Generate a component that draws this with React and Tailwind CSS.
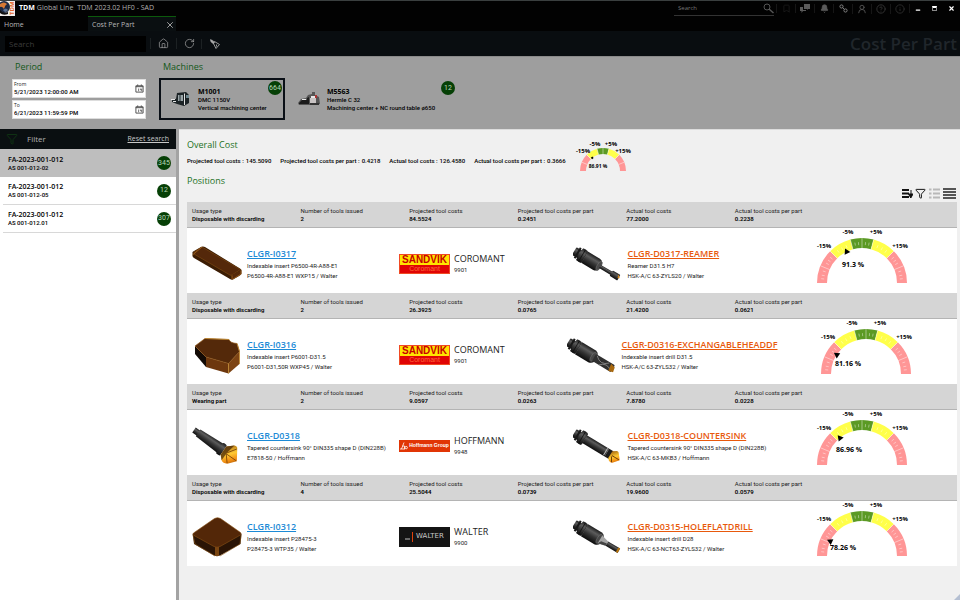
import React from "react";
import {
  House, RotateCw, X, Bell, UserRound, CircleHelp, Info, Funnel, Minus, Bookmark,
} from "lucide-react";

const positions = [
  {
    stats: ["Disposable with discarding", "2", "84.5524", "0.2451", "77.2000", "0.2238"],
    item: { art: "bar", name: "CLGR-I0317", lines: ["Indexable insert P6500-4R-A88-E1", "P6500-4R-A88-E1 WXP15 / Walter"] },
    brand: { logo: "sandvik", name: "COROMANT", code: "9901" },
    tool: { art: "reamer", name: "CLGR-D0317-REAMER", lines: ["Reamer D31.5 H7", "HSK-A/C 63-ZYLS20 / Walter"] },
    gauge: { value: 91.3, label: "91.3 %", x: -9, y: -16 },
  },
  {
    stats: ["Disposable with discarding", "2", "26.3925", "0.0765", "21.4200", "0.0621"],
    item: { art: "trigon", name: "CLGR-I0316", lines: ["Indexable insert P6001-D31.5", "P6001-D31,50R WXP45 / Walter"] },
    brand: { logo: "sandvik", name: "COROMANT", code: "9901" },
    tool: { art: "drill", name: "CLGR-D0316-EXCHANGABLEHEADDF", lines: ["Indexable insert drill D31.5", "HSK-A/C 63-ZYLS32 / Walter"] },
    gauge: { value: 81.16, label: "81.16 %", x: -18, y: -8 },
    wide: true,
  },
  {
    stats: ["Wearing part", "2", "9.0597", "0.0263", "7.8780", "0.0228"],
    item: { art: "sink", name: "CLGR-D0318", lines: ["Tapered countersink 90° DIN335 shape D (DIN228B)", "E7818-50 / Hoffmann"] },
    brand: { logo: "hoffmann", name: "HOFFMANN", code: "9948" },
    tool: { art: "countersink", name: "CLGR-D0318-COUNTERSINK", lines: ["Tapered countersink 90° DIN335 shape D (DIN228B)", "HSK-A/C 63-MKB3 / Hoffmann"] },
    gauge: { value: 86.96, label: "86.96 %", x: -13, y: -13 },
  },
  {
    stats: ["Disposable with discarding", "4", "25.5044", "0.0739", "19.9600", "0.0579"],
    item: { art: "square", name: "CLGR-I0312", lines: ["Indexable insert P28475-3", "P28475-3 WTP35 / Walter"] },
    brand: { logo: "walter", name: "WALTER", code: "9900" },
    tool: { art: "flatdrill", name: "CLGR-D0315-HOLEFLATDRILL", lines: ["Indexable insert drill D28", "HSK-A/C 63-NCT63-ZYLS32 / Walter"] },
    gauge: { value: 78.26, label: "78.26 %", x: -19, y: -6 },
  },
];

const statLabels = [
  "Usage type", "Number of tools issued", "Projected tool costs",
  "Projected tool costs per part", "Actual tool costs", "Actual tool costs per part",
];

const parts = [
  { name: "FA-2023-001-012", sub: "AS 001-012-02", count: 345, active: true },
  { name: "FA-2023-001-012", sub: "AS 001-012-05", count: 12 },
  { name: "FA-2023-001-012", sub: "AS 001-012.01", count: 307 },
];

const totals = [
  ["Projected tool costs :", "145.5090"],
  ["Projected tool costs per part :", "0.4218"],
  ["Actual tool costs :", "126.4580"],
  ["Actual tool costs per part :", "0.3666"],
];

/* Angles are measured in degrees from the top of the dial, negative to the left. */
const at = (deg, r) => {
  const a = (deg * Math.PI) / 180;
  return [Math.sin(a) * r, -Math.cos(a) * r];
};
const band = (from, to, r, R) => {
  const [a, b] = at(from, R), [c, d] = at(to, R), [e, f] = at(to, r), [g, h] = at(from, r);
  return `M${a} ${b}A${R} ${R} 0 0 1 ${c} ${d}L${e} ${f}A${r} ${r} 0 0 0 ${g} ${h}Z`;
};
const bands = [
  [-90, -45, "#ff9696"], [-45, -15, "#ffff4a"], [-15, 15, "#5b9a24"], [15, 45, "#ffff4a"], [45, 90, "#ff9696"],
];

function Gauge({ value, label, x, y, small }) {
  const R = small ? 23 : 45;
  const r = small ? 17 : 35;
  const turn = (value - 100) * 3;
  const marks = small
    ? [["-15%", -20, -18], ["-5%", -8, -25], ["+5%", 8, -25], ["+15%", 20, -18]]
    : [["-15%", -38, -35], ["-5%", -14, -49], ["+5%", 14, -49], ["+15%", 38, -35]];
  return (
    <svg
      viewBox={small ? "-30 -32 60 33" : "-50 -55 100 56"}
      className={small ? "h-[33px] w-[60px]" : "h-[56px] w-[100px]"}
      role="img"
      aria-label={label}
    >
      {bands.map(([f, t, c]) => <path key={f} d={band(f, t, r, R)} fill={c} />)}
      {[-67.5, -45, -15, 0, 15, 45, 67.5].map((d) => {
        const [a, b] = at(d, r), [e, f] = at(d, R);
        return <line key={d} x1={a} y1={b} x2={e} y2={f} stroke="#fff" strokeWidth="0.6" opacity="0.75" />;
      })}
      {!small && [-84, -79, -73, -61, -56, -51, -37, -30, -23, -10, -5, 5, 10, 23, 30, 37, 51, 56, 61, 73, 79, 84].map((d) => {
        const [a, b] = at(d, 38), [e, f] = at(d, 41);
        return <line key={d} x1={a} y1={b} x2={e} y2={f} stroke="#fff" strokeWidth="0.7" opacity="0.6" />;
      })}
      <g transform={`rotate(${turn})`}>
        {small ? <rect x="-1" y="-18" width="2" height="2" /> : <path d="M0 -38.500L3.200 -33H-3.200Z" />}
      </g>
      <g fontWeight="700" textAnchor="middle" fill="#000">
        {marks.map(([t, mx, my]) => <text key={t} x={mx} y={my} fontSize="6">{t}</text>)}
        <text x={x} y={y} fontSize={small ? 5 : 7}>{label}</text>
      </g>
    </svg>
  );
}

function Art({ kind }) {
  const box = "h-[42px] w-[50px] shrink-0";
  if (kind === "bar")
    return (
      <svg viewBox="0 0 50 42" className={box} aria-hidden="true">
        <path d="M.5 10Q0 9 2 8L9 4Q11 3 13 4L48 25.500Q50 27 49.500 28V31Q49 32 41 36.500Q39.500 37 38 36L2 15Q.5 14 .5 13Z" fill="#3c1d04" />
        <path d="M2 9L10 4L48.500 26.500L40 32Q39 32.500 38 32L2 11Z" fill="#54280a" stroke="#7a4712" strokeWidth=".7" />
        <path d="M40 32L49 27V31L40 36.500Z" fill="#55290a" />
        <path d="M40 32.500V36.500M49 27.500V31L41 36M.5 12L10 4" stroke="#a5651c" strokeWidth=".8" fill="none" />
      </svg>
    );
  if (kind === "trigon")
    return (
      <svg viewBox="0 0 50 42" className={box} aria-hidden="true">
        <path d="M3 12L14 23V33L3 20Z" fill="#120a05" />
        <path d="M14 23L36.500 29.500V39.500L14 33Z" fill="#6d370e" />
        <path d="M36.500 29.500L47.500 17.500V30L36.500 39.500Z" fill="#7d4414" />
        <path d="M3 12L13 4.500L37 5.500Q38 9 45 9.500L47.500 17.500L36.500 29.500L14 23Z" fill="#54290a" stroke="#8f5617" strokeWidth=".7" />
        <path d="M13 4.500L37 5.500M45 9.500L47.500 17.500V30M36.500 29.500V39.500" stroke="#c28a30" strokeWidth=".8" fill="none" />
      </svg>
    );
  if (kind === "square")
    return (
      <svg viewBox="0 0 50 42" className={box} aria-hidden="true">
        <path d="M.7 18L2 28L22 39.500Q25 41 28 39.500L48.500 28L49.500 18Z" fill="#2a1405" />
        <path d="M1.500 17Q0 18 2 19.500L22 30.500Q25 32 28 30.500L48.500 19Q50 18 48.500 16.500L28.500 2.500Q25.500 .8 22.500 2.500Z" fill="#532708" stroke="#8a5216" strokeWidth=".6" />
        <path d="M23 31V40H27V31Z" fill="#7a4511" />
        <path d="M1 19L3 28L23 40M49 19L48 28L28 40" stroke="#8e5717" strokeWidth=".6" fill="none" />
      </svg>
    );
  const id = `steel-${kind}`;
  const gold = `gold-${kind}`;
  return (
    <svg viewBox="0 0 50 42" className={box} aria-hidden="true">
      <defs>
        <linearGradient id={id} x1="0" y1="0" x2="0" y2="1">
          <stop offset="0" stopColor="#1c1c1c" />
          <stop offset=".3" stopColor="#5c5c5c" />
          <stop offset=".6" stopColor="#333" />
          <stop offset="1" stopColor="#0d0d0d" />
        </linearGradient>
        <linearGradient id={gold} x1="0" y1="0" x2="1" y2="1">
          <stop offset="0" stopColor="#8a4a08" />
          <stop offset=".45" stopColor="#ffc933" />
          <stop offset=".7" stopColor="#f08a10" />
          <stop offset="1" stopColor="#6b3303" />
        </linearGradient>
      </defs>
      {kind === "sink" ? (
        <g transform="translate(2 5) rotate(35)">
          <rect x="0" y="-3" width="6" height="6" fill={`url(#${id})`} />
          <path d="M5 -4L32 -5.500V5.500L5 4Z" fill={`url(#${id})`} />
          <rect x="31" y="-6.500" width="5" height="13" rx="1.500" fill={`url(#${id})`} />
          <path d="M36 -5L42 -10.500Q45 -12 46.500 -9L53 1L46.500 8.500Q43 11 40 9L36 5Z" fill={`url(#${gold})`} />
          <path d="M36 -5L42 -10.500L40 0L40 9L36 5Z" fill="#4a2a08" opacity=".75" />
          <path d="M40 0L46 -9M40 1L52 1M40 1L46 8" stroke="#7a4306" strokeWidth=".8" />
        </g>
      ) : (
        <g transform="translate(3 9) rotate(31)">
          <rect x="-2" y="-4.500" width="7" height="9" rx="1" fill={`url(#${id})`} />
          <rect x="1" y="-6" width="2" height="12" fill="#191919" />
          <rect x="4" y="-7" width="6" height="14" rx="1" fill={`url(#${id})`} />
          <path d="M7 -7V7M10 -6V6" stroke="#0c0c0c" strokeWidth=".7" />
          {kind === "countersink" ? (
            <>
              <rect x="10" y="-4.500" width="26" height="9" fill={`url(#${id})`} />
              <rect x="34" y="-4" width="1" height="8" fill="#bbb" />
              <rect x="36" y="-4.500" width="5" height="9" fill="#1c1c1c" />
              <path d="M40 -4L44 -6.500Q46 -7 47 -5L51 0L46 6Q44 7 42 6L40 4Z" fill={`url(#${gold})`} />
              <path d="M42 0H50M42 1L45 6" stroke="#5e2f04" strokeWidth=".8" />
            </>
          ) : (
            <>
              <path d={kind === "reamer" ? "M10 -6.500H24Q29 -6 29 0T24 6.500H10Z" : "M10 -7H26Q31 -6 31 0T26 7H10Z"} fill={`url(#${id})`} />
              <ellipse cx="27" cy="0" rx="2" ry="5" fill="#484848" stroke="#777" strokeWidth=".5" />
              {kind === "reamer" && (
                <>
                  <rect x="28" y="-1.800" width="14" height="3.600" fill={`url(#${id})`} />
                  <rect x="41" y="-3.200" width="9" height="6.400" rx="1" fill={`url(#${id})`} />
                  <path d="M48 -3L51 0L49 1Z" fill="#d88a1c" />
                </>
              )}
              {kind === "drill" && (
                <>
                  <rect x="28" y="-4" width="22" height="8" rx="1" fill="#303030" />
                  <path d="M30 -3Q37 4 44 -3M36 4Q42 -3 49 3" stroke="#888" strokeWidth=".8" fill="none" />
                  <path d="M46 -3.500L51 -2L52 3L47 4Z" fill="#a8680e" />
                </>
              )}
              {kind === "flatdrill" && (
                <>
                  <path d="M28 -4.500L36 -2.500V2.500L28 4.500Z" fill="#a5a5a5" />
                  <path d="M30 1L36 0V2.500L28 4.500Z" fill="#444" />
                  <rect x="36" y="-2.500" width="14" height="5" fill={`url(#${id})`} />
                  <rect x="48" y="-2.500" width="2" height="5" fill="#b8750f" />
                </>
              )}
            </>
          )}
        </g>
      )}
    </svg>
  );
}

function BrandLogo({ kind }) {
  if (kind === "sandvik")
    return (
      <span className="flex h-[20px] w-[51px] shrink-0 flex-col items-center overflow-hidden border border-[#f04a24] bg-[#e00404] font-[family-name:'Liberation_Sans',sans-serif]">
        <span className="flex h-[10px] w-full items-center justify-center bg-[#ffe400] text-[10px] leading-none font-bold text-[#c80000]">SANDVIK</span>
        <span className="text-[7px] leading-[8px] text-[#ff6a3c]">Coromant</span>
      </span>
    );
  if (kind === "hoffmann")
    return (
      <span className="flex h-[12px] w-[51px] shrink-0 items-center justify-center gap-px bg-[#e13505] text-white">
        <svg viewBox="0 0 8 8" className="size-[8px]" fill="none" stroke="currentColor" strokeWidth=".8" aria-hidden="true">
          <path d="M0 7H5M1.500 7L4 .5M2.500 4H4.500V7" />
          <circle cx="6.200" cy="5.600" r="1.200" />
        </svg>
        <span className="font-[family-name:'Liberation_Sans',sans-serif] text-[5px] leading-none font-bold">Hoffmann Group</span>
      </span>
    );
  return (
    <span className="flex h-[20px] w-[51px] shrink-0 items-center justify-center gap-[2px] bg-[#141414] text-[#c8c8c8]">
      <svg viewBox="0 0 9 10" className="h-[10px] w-[9px]" fill="none" aria-hidden="true">
        <path d="M0 7H5" stroke="#bbb" />
        <path d="M7.500 0V10" stroke="#e1420c" />
      </svg>
      <span className="font-[family-name:'DejaVu_Sans',sans-serif] text-[7px] leading-none">WALTER</span>
    </span>
  );
}

const small = "font-[family-name:Roboto,'Open_Sans',sans-serif] text-[6px]";

function Badge({ children }) {
  return (
    <span className="flex size-[14px] shrink-0 items-center justify-center rounded-full bg-[#064006] font-[family-name:Roboto,'Open_Sans',sans-serif] text-[7px] leading-none text-[#b9d6b9]">
      {children}
    </span>
  );
}

function Position({ p }) {
  return (
    <li className="bg-white">
      <dl className={`grid h-[26px] grid-cols-7 content-center border-b border-[#b4b4b4] bg-[#d5d5d5] px-[5px] leading-[8px] ${small}`}>
        {statLabels.map((l, i) => (
          <div key={l} className="whitespace-nowrap">
            <dt className="text-[#1c1c1c]">{l}</dt>
            <dd className="font-semibold text-black">{p.stats[i]}</dd>
          </div>
        ))}
      </dl>
      <div className="flex h-[65px] items-center pl-[5px] text-[#1c1c1c]">
        <div className="flex w-[207px] shrink-0 items-center gap-[5px] pt-[6px]">
          <Art kind={p.item.art} />
          <div className="whitespace-nowrap">
            <a href="#item" className="block text-[9px] leading-[14px] font-semibold text-[#1c8ad6] underline">{p.item.name}</a>
            {p.item.lines.map((l) => <p key={l} className={`leading-[10px] ${small}`}>{l}</p>)}
          </div>
        </div>
        <div className="flex w-[162px] shrink-0 items-center gap-[4px] pt-[6px]">
          <BrandLogo kind={p.brand.logo} />
          <div>
            <p className="text-[9px] leading-[12px]">{p.brand.name}</p>
            <p className={`leading-[10px] ${small}`}>{p.brand.code}</p>
          </div>
        </div>
        <div className="flex w-[217px] shrink-0 items-center justify-center gap-[5px] pt-[6px]">
          <Art kind={p.tool.art} />
          <div className={p.wide ? "w-[151px] whitespace-nowrap" : "w-[139px] whitespace-nowrap"}>
            <a href="#tool" className="block w-max text-[9px] leading-[14px] font-semibold text-[#e8590c] underline">{p.tool.name}</a>
            {p.tool.lines.map((l) => <p key={l} className={`leading-[10px] ${small}`}>{l}</p>)}
          </div>
        </div>
        <div className={p.wide ? "flex flex-1 justify-center self-start pr-[4px]" : "flex flex-1 justify-center self-start pr-[11px]"}>
          <Gauge {...p.gauge} />
        </div>
      </div>
    </li>
  );
}

function MachineArt({ second }) {
  return second ? (
    <svg viewBox="0 0 23 16" className="h-[16px] w-[23px]" aria-hidden="true">
      <path d="M0 12L3 8L8 7L10 4L14 3V1H17V4L21 6L22 13L12 14H1Z" fill="#555" />
      <path d="M1 12L4 9L9 9V13H1ZM9 13V7L11 6V13Z" fill="#1c1c1c" />
      <path d="M12 7H18V12H12Z" fill="#c9c4c4" />
      <path d="M13 5H17V7H13ZM4 8H8V9H4Z" fill="#e8e8e8" />
      <path d="M17 4H19V7H17Z" fill="#a33" />
      <path d="M12 12H21V14H12Z" fill="#333" />
    </svg>
  ) : (
    <svg viewBox="0 0 19 16" className="h-[16px] w-[19px]" aria-hidden="true">
      <path d="M6 2L15 1L18 4V12L13 15L6 13L1 11V8L5 8Z" fill="#1c2326" />
      <path d="M7 4H12V10H7Z" fill="#9aa5a8" />
      <path d="M8 4H10V10H8Z" fill="#5c676a" />
      <path d="M0 8H4V9H0ZM2 10H5V11H2ZM13 3L14 2V14H13Z" fill="#e4e4e4" />
      <path d="M15 4H18V7H15Z" fill="#6f8890" />
    </svg>
  );
}

function Machine({ name, type, text, count, active }) {
  return (
    <button
      type="button"
      className={
        active
          ? "flex h-[42px] w-[126px] items-center gap-[8px] border-2 border-[#0a0f16] pl-[10px] text-left"
          : "flex h-[42px] items-center gap-[6px] border-2 border-transparent pl-[11px] text-left"
      }
    >
      <MachineArt second={!active} />
      <span className="flex flex-1 flex-col whitespace-nowrap text-black">
        <span className="text-[7px] leading-[9px] font-bold">{name}</span>
        <span className={`leading-[8px] font-medium ${small}`}>{type}</span>
        <span className={`leading-[8px] font-medium ${small}`}>{text}</span>
      </span>
      <span className={active ? "-ml-[12px] self-start pt-px pr-px" : "self-start pt-px"}>
        <Badge>{count}</Badge>
      </span>
    </button>
  );
}

function DateField({ id, label, value }) {
  return (
    <div className="flex h-[19px] items-center border border-[#ddd] bg-white pr-px pl-px">
      <div className="min-w-0 flex-1">
        <label htmlFor={id} className="block text-[5px] leading-[6px] text-[#222]">{label}</label>
        <input id={id} defaultValue={value} className={`block h-[10px] w-full bg-transparent font-medium text-black outline-none ${small}`} />
      </div>
      <button type="button" aria-label={`Pick ${label} date`} className="flex size-[10px] items-center justify-center text-[#444]">
        <svg viewBox="0 0 10 10" className="size-[9px]" fill="none" stroke="currentColor" aria-hidden="true">
          <path d="M1 2H9V9H1ZM1 3H9M3 .5V2M7 .5V2" />
          <path d="M4 5V8M6 5V6.500H7.500M7.500 5V8" strokeWidth=".8" />
        </svg>
      </button>
    </div>
  );
}

function TitleIcon({ label, children, className }) {
  return (
    <button type="button" aria-label={label} className={`flex w-[19px] items-center justify-center border-l border-[#161616] ${className}`}>
      {children}
    </button>
  );
}

export default function App() {
  return (
    <div className="flex min-h-screen flex-col bg-[#f0f0f0] font-[family-name:'Open_Sans','Noto_Sans',sans-serif]">
      <header className="bg-[#020202]">
        <div className="flex h-[16px] items-center border-t border-[#3a3f3f]">
          <svg viewBox="0 0 15 15" className="size-[15px]" aria-hidden="true">
            <rect width="15" height="15" fill="#f3efec" />
            <circle cx="4" cy="6" r="6" fill="#1d2a44" />
            <path d="M0 3Q4 0 7 3Q5 4 4 8Q2 5 0 6Z" fill="#d77a35" />
            <path d="M3 9Q6 6 8 9L6 11Q4 11 3 9Z" fill="#5d7394" />
            <path d="M0 9Q3 13 8 11V13Q3 15 0 12Z" fill="#111" />
            <text transform="translate(14 14) rotate(-90)" fontSize="6" fontWeight="700" fill="#e2662a">TDM</text>
          </svg>
          <h1 className="flex flex-1 items-center pl-[4px] text-[7px] whitespace-nowrap text-[#b0b0b0]">
            <span className="font-bold text-white">TDM</span>
            <span className="pl-[2px]">Global Line</span>
            <span className="pl-[4px]">TDM 2023.02 HF0 - SAD</span>
          </h1>
          <div className="mr-[2px] flex w-[100px] items-center border-b border-[#333] pl-[4px]">
            <input type="search" aria-label="Search application" placeholder="Search" className="h-[13px] w-full min-w-0 bg-transparent text-[6px] text-[#888] outline-none placeholder:text-[#777]" />
            <svg viewBox="0 0 11 11" className="size-[11px] shrink-0 text-[#555]" fill="none" stroke="currentColor" aria-hidden="true">
              <circle cx="4" cy="4" r="3" />
              <path d="M6 6L10.500 10" strokeWidth="1.500" />
            </svg>
          </div>
          <TitleIcon label="Notes" className="text-[#1e1e1e]"><Bookmark className="size-[9px]" /></TitleIcon>
          <TitleIcon label="Messages" className="text-[#5a5a5a]">
            <svg viewBox="0 0 10 9" className="h-[9px] w-[10px]" fill="currentColor" aria-hidden="true">
              <path d="M4 0H10V5H8L7 6V5H4ZM0 3H3V6H6V7H3L1.500 9V7H0Z" />
            </svg>
          </TitleIcon>
          <TitleIcon label="Notifications" className="text-[#5a5a5a]"><Bell className="size-[9px] fill-current" /></TitleIcon>
          <TitleIcon label="Connections" className="text-[#808080]">
            <svg viewBox="0 0 9 9" className="size-[9px]" fill="none" stroke="currentColor" aria-hidden="true">
              <circle cx="2.500" cy="2.500" r="1.600" />
              <circle cx="6.500" cy="6.500" r="1.600" />
              <path d="M3.500 3.500L5.500 5.500" />
            </svg>
          </TitleIcon>
          <TitleIcon label="Account" className="text-[#5a5a5a]"><UserRound className="size-[10px]" /></TitleIcon>
          <TitleIcon label="Help" className="text-[#3a3a3a]"><CircleHelp className="size-[10px]" /></TitleIcon>
          <TitleIcon label="About" className="text-[#303030]"><Info className="size-[10px]" /></TitleIcon>
          <button type="button" aria-label="Minimize" className="flex w-[17px] justify-center border-l border-[#161616] pt-[3px] text-white"><Minus className="size-[6px]" strokeWidth={5} /></button>
          <button type="button" aria-label="Restore" className="flex w-[17px] justify-center"><span className="h-[5px] w-[5px] border border-t-2 border-[#888] border-t-white" /></button>
          <button type="button" aria-label="Close" className="flex w-[17px] justify-center text-white"><X className="size-[7px]" strokeWidth={4} /></button>
        </div>
        <nav className="flex h-[15px] text-[7px] text-[#b8b8b8]">
          <button type="button" className="w-[88px] pt-[3px] pl-[4px] text-left">Home</button>
          <div className="flex w-[88px] items-center justify-between border-t border-[#0c5a0c] bg-[#0a0f11] pt-[2px] pr-px pl-[4px]">
            <button type="button">Cost Per Part</button>
            <button type="button" aria-label="Close tab"><X className="size-[10px]" strokeWidth={2} /></button>
          </div>
        </nav>
        <div className="flex h-[25px] items-center bg-[#090d10] pl-[5px] text-[#a8a8a8]">
          <input type="search" aria-label="Search" placeholder="Search" className="h-[16px] w-[141px] bg-black px-[4px] text-[8px] outline-none placeholder:text-[#3c3c3c]" />
          <button type="button" aria-label="Start page" className="ml-[4px] flex w-[26px] justify-center border-l border-[#1c2123]"><House className="size-[11px]" strokeWidth={1.500} /></button>
          <button type="button" aria-label="Refresh" className="flex w-[25px] justify-center border-l border-[#1c2123]"><RotateCw className="size-[11px]" strokeWidth={1.500} /></button>
          <button type="button" aria-label="Clear" className="flex w-[26px] justify-center border-l border-[#1c2123]">
            <svg viewBox="0 0 10 10" className="size-[10px]" fill="none" stroke="currentColor" aria-hidden="true">
              <path d="M4.500 2.500L9.500 5.500L6 9.500L3.500 4.500ZM6.500 5.500V7.500" strokeWidth=".9" />
              <path d="M0 .5L2 1L4.500 3L3.500 5L1 3Z" fill="currentColor" strokeWidth=".4" />
            </svg>
          </button>
          <h2 className="flex-1 pr-[3px] text-right text-[17px] leading-none font-semibold text-[#20262b]">Cost Per Part</h2>
        </div>
      </header>

      <section className="flex h-[73px] gap-[13px] border-t border-[#8a8a8a] bg-[#9e9e9e] pl-[12px]">
        <div className="w-[134px]">
          <h3 className="pt-[3px] pl-[3px] text-[9px] leading-[14px] text-[#14591a]">Period</h3>
          <div className="flex flex-col gap-[2px] pt-[5px]">
            <DateField id="from" label="From" value="5/21/2023 12:00:00 AM" />
            <DateField id="to" label="To" value="6/21/2023 11:59:59 PM" />
          </div>
        </div>
        <div>
          <h3 className="pt-[3px] pl-[4px] text-[9px] leading-[14px] text-[#14591a]">Machines</h3>
          <div className="flex pt-[4px]">
            <Machine active name="M1001" type="DMC 1150V" text="Vertical machining center" count={664} />
            <Machine name="M5563" type="Hermle C 32" text="Machining center + NC round table ø650" count={12} />
          </div>
        </div>
      </section>

      <div className="flex flex-1">
        <aside className="w-[179px] shrink-0 border-r-[3px] border-[#a3a3a3] bg-white">
          <div className="flex h-[20px] items-center bg-[#0a0f11] pr-[7px] pl-[6px]">
            <Funnel className="size-[12px] text-[#123d14]" strokeWidth={1.500} />
            <h3 className="flex-1 pl-[9px] text-[8px] text-[#b0b0b0]">Filter</h3>
            <a href="#reset" className="text-[7px] text-[#c8c8c8] underline">Reset search</a>
          </div>
          <ul>
            {parts.map((p) => (
              <li key={p.sub} className={p.active ? "bg-[#bebebe]" : "ml-[3px] border-b border-[#d8d8d8]"}>
                <button type="button" className={p.active ? "flex h-[28px] w-full items-center justify-between pr-[5px] pl-[8px] text-left" : "flex h-[27px] w-full items-center justify-between pr-[5px] pl-[5px] text-left"}>
                  <span className="text-black">
                    <span className="block text-[7px] leading-[9px] font-semibold">{p.name}</span>
                    <span className={`block leading-[8px] font-medium ${small}`}>{p.sub}</span>
                  </span>
                  <Badge>{p.count}</Badge>
                </button>
              </li>
            ))}
          </ul>
        </aside>

        <main className="relative min-w-0 flex-1 border-t border-[#dcdcdc] pr-[3px] pl-[8px]">
          <div className="flex h-[43px] items-start">
            <div>
              <h3 className="pt-[8px] text-[9px] leading-[14px] text-[#1c7024]">Overall Cost</h3>
              <dl className={`flex gap-[9px] pt-[5px] leading-[8px] font-medium whitespace-nowrap text-black ${small}`}>
                {totals.map(([l, v]) => (
                  <div key={l} className="flex gap-[2px]"><dt>{l}</dt><dd>{v}</dd></div>
                ))}
              </dl>
            </div>
            <div className="pt-[9px] pl-[7px]">
              <Gauge small value={86.91} label="86.91 %" x={-5} y={-3} />
            </div>
          </div>
          <h3 className="pt-px text-[9px] leading-[14px] text-[#1c7024]">Positions</h3>
          <div className="flex h-[14px] items-start justify-end gap-[2px] pr-px text-black">
            <button type="button" aria-label="Sort" className="flex h-[11px] items-center">
              <svg viewBox="0 0 11 9" className="h-[9px] w-[11px]" aria-hidden="true">
                <path d="M0 1H7M0 4.500H7M0 8H7" stroke="#111" strokeWidth="2" />
                <path d="M9 1V6M6.500 5H11L8.800 9Z" stroke="#111" strokeWidth="1" fill="#111" />
              </svg>
            </button>
            <button type="button" aria-label="Filter positions"><Funnel className="size-[11px]" strokeWidth={2} /></button>
            <button type="button" aria-label="Compact list" className="mx-px text-[#b8b8b8]">
              <svg viewBox="0 0 11 11" className="size-[11px]" fill="none" stroke="currentColor" strokeWidth="2" aria-hidden="true">
                <path d="M0 1.500H2.500M0 5.500H2.500M0 9.500H2.500M4 1.500H11M4 5.500H11M4 9.500H11" />
              </svg>
            </button>
            <button type="button" aria-label="Detailed list">
              <svg viewBox="0 0 13 11" className="h-[11px] w-[13px]" aria-hidden="true">
                <path d="M0 1H13M0 4H13M0 7H13M0 10H13" stroke="#222" strokeWidth="1.500" />
              </svg>
            </button>
          </div>
          <ul>
            {positions.map((p) => <Position key={p.item.name} p={p} />)}
          </ul>
          <svg viewBox="0 0 6 6" className="absolute right-0 bottom-0 size-[6px]" aria-hidden="true">
            <path d="M6 0V6H0Z" fill="#b4bfd2" />
          </svg>
        </main>
      </div>
    </div>
  );
}
